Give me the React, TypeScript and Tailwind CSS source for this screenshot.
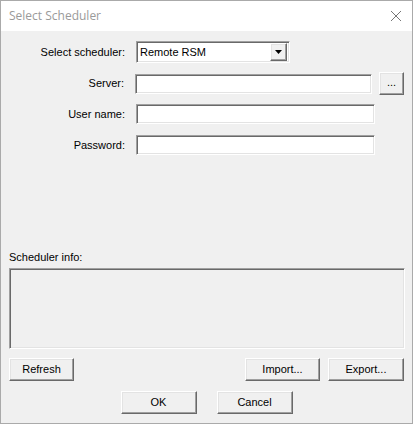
const raised =
  "border border-t-white border-l-white border-r-[#696969] border-b-[#696969] shadow-[inset_-1px_-1px_#a0a0a0,inset_1px_1px_#e3e3e3] bg-[#f0f0f0]";
const sunken =
  "border border-t-[#a0a0a0] border-l-[#a0a0a0] border-r-white border-b-white shadow-[inset_1px_1px_#696969,inset_-1px_-1px_#e3e3e3]";

function Field({ label }: { label: string }) {
  return (
    <div className="flex h-[20px] items-center">
      <div className="w-[125px] pr-[1px] text-right">{label}</div>
      <div className={`ml-[10px] h-[20px] w-[239px] bg-white ${sunken}`} />
    </div>
  );
}

function Btn({ label, className = "" }: { label: string; className?: string }) {
  return (
    <button className={`flex h-[23px] items-center justify-center ${raised} ${className}`}>
      {label}
    </button>
  );
}

export default function App() {
  return (
    <div className="flex h-[424px] w-[413px] flex-col border border-[#aaaaaa] bg-[#f0f0f0] font-['Liberation_Sans',Arial,sans-serif] text-[11px] text-black">
      <div className="flex h-[30px] shrink-0 items-center justify-between bg-white pl-[8px] pr-[9px]">
        <span className="font-['Open_Sans','Liberation_Sans',sans-serif] text-[12px] text-[#9a9a9a]">
          Select Scheduler
        </span>
        <svg width="12" height="12" viewBox="0 0 12 12" className="mr-[1px]">
          <path d="M1 1L11 11M11 1L1 11" stroke="#777" strokeWidth="1" />
        </svg>
      </div>

      <div className="flex flex-1 flex-col px-[8px]">
        <div className="mt-[10px] flex h-[22px] items-center">
          <div className="w-[117px] pr-[1px] text-right">Select scheduler:</div>
          <div className={`ml-[10px] flex h-[22px] w-[154px] items-center bg-white ${sunken}`}>
            <span className="flex-1 pl-[3px]">Remote RSM</span>
            <div className={`mr-[2px] flex h-[18px] w-[17px] items-center justify-center ${raised}`}>
              <svg width="7" height="4" viewBox="0 0 7 4">
                <path d="M0 0H7L3.5 4Z" fill="#000" />
              </svg>
            </div>
          </div>
        </div>

        <div className="mt-[9px] flex h-[23px] items-center -ml-[8px]">
          <div className="w-[125px] pr-[1px] text-right">Server:</div>
          <div className={`ml-[10px] h-[20px] w-[239px] bg-white ${sunken}`} />
          <button className={`ml-[7px] flex h-[23px] w-[25px] items-center justify-center pb-[2px] ${raised}`}>
            ...
          </button>
        </div>

        <div className="mt-[9px] -ml-[8px]">
          <Field label="User name:" />
        </div>
        <div className="mt-[11px] -ml-[8px]">
          <Field label="Password:" />
        </div>

        <div className="mt-[95px] h-[14px] leading-[14px]">Scheduler info:</div>
        <div className={`mt-[4px] h-[81px] w-[396px] ${sunken}`} />

        <div className="mt-[9px] flex">
          <Btn label="Refresh" className="w-[65px]" />
          <div className="flex-1" />
          <Btn label="Import..." className="w-[75px]" />
          <Btn label="Export..." className="ml-[8px] w-[76px]" />
        </div>

        <div className="mt-[10px] flex justify-center gap-[20px]">
          <Btn label="OK" className="w-[76px]" />
          <Btn label="Cancel" className="w-[76px]" />
        </div>
      </div>
    </div>
  );
}
